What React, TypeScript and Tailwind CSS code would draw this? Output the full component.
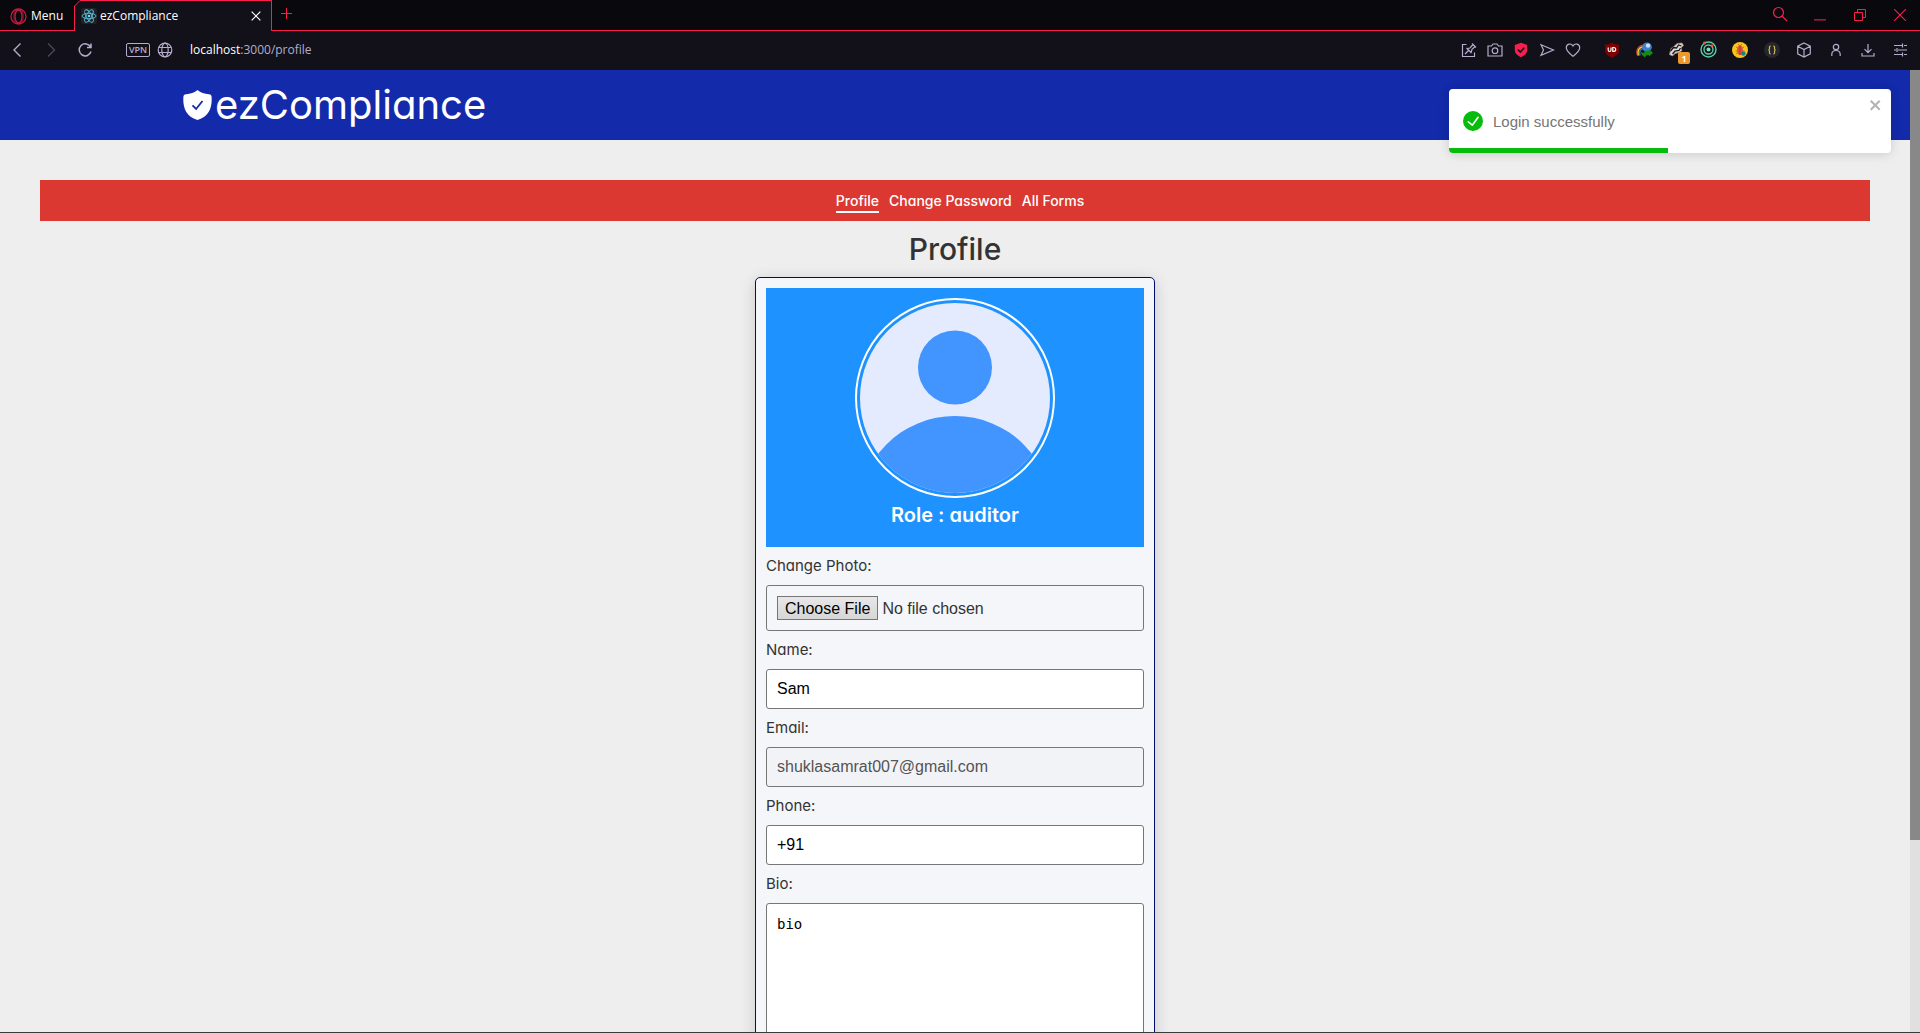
import React, { ReactNode } from "react";

const stroke = {
  fill: "none",
  stroke: "currentColor",
  strokeWidth: 1.2,
} as const;

function Glyph({ size = 16, children }: { size?: number; children: ReactNode }) {
  return (
    <svg width={size} height={size} viewBox="0 0 16 16" aria-hidden="true" {...stroke}>
      {children}
    </svg>
  );
}

function BarButton({ label, wide, children }: { label: string; wide?: boolean; children: ReactNode }) {
  return (
    <button
      type="button"
      aria-label={label}
      className={
        wide
          ? "relative flex h-full w-8 items-center justify-center"
          : "relative flex h-full w-[26px] items-center justify-center"
      }
    >
      {children}
    </button>
  );
}

function TabStrip() {
  return (
    <div className="flex h-[31px] shrink-0 bg-[#08080d] font-['Open_Sans',sans-serif] text-xs text-white">
      <button
        type="button"
        className="flex w-[74px] shrink-0 items-center gap-1 border-b border-[#fa1e4e] pl-2.5 pt-0.5"
      >
        <svg width="17" height="17" viewBox="0 0 17 17" fill="none" stroke="#c41c42" strokeWidth="1.3" aria-hidden="true">
          <circle cx="8.5" cy="8.5" r="7.5" />
          <ellipse cx="8.5" cy="8.5" rx="3.5" ry="6.5" />
          <path d="M11 2.500c3 2 3 10 0 12M6 2.500c-3 2-3 10 0 12" strokeWidth=".7" />
        </svg>
        <span>Menu</span>
      </button>
      <div className="relative flex w-[198px] shrink-0 items-center border-x border-t border-[#fa1e4e] bg-[#121019] pl-1.5 pr-[7px]">
        <svg className="absolute -left-px -top-px" width="7" height="7" viewBox="0 0 7 7" aria-hidden="true">
          <path d="M0 0h7L0 7z" fill="#08080d" />
          <path d="M.5 7V6L6 .5h1" fill="none" stroke="#fa1e4e" />
        </svg>
        <svg width="16" height="16" viewBox="0 0 16 16" aria-hidden="true">
          <rect width="16" height="16" rx="2" fill="#202124" />
          <g fill="none" stroke="#61dafb" strokeWidth=".9" opacity=".85">
            <ellipse cx="8" cy="8" rx="7" ry="2.7" />
            <ellipse cx="8" cy="8" rx="7" ry="2.7" transform="rotate(60 8 8)" />
            <ellipse cx="8" cy="8" rx="7" ry="2.7" transform="rotate(120 8 8)" />
          </g>
          <circle cx="8" cy="8" r="1.3" fill="#61dafb" />
        </svg>
        <span className="ml-[3px] flex-1">ezCompliance</span>
        <button type="button" aria-label="Close tab" className="flex size-4 items-center justify-center">
          <Glyph size={14}>
            <path d="M3 3l10 10M13 3L3 13" strokeWidth="1.4" />
          </Glyph>
        </button>
      </div>
      <div className="flex flex-1 items-center justify-between border-b border-[#fa1e4e] text-[#fa1e4e]">
        <button type="button" aria-label="New tab" className="flex h-full w-[29px] items-center justify-center pb-1">
          <svg width="11" height="11" viewBox="0 0 11 11" fill="none" stroke="currentColor" aria-hidden="true">
            <path d="M5.500 0v11M0 5.500h11" />
          </svg>
        </button>
        <div className="flex h-full">
          <button type="button" aria-label="Search tabs" className="flex w-10 items-center justify-center pb-0.5">
            <Glyph>
              <circle cx="6.5" cy="6.5" r="5" />
              <path d="M10 10l5 5" />
            </Glyph>
          </button>
          <button type="button" aria-label="Minimize" className="flex w-10 items-center justify-center">
            <Glyph size={12}>
              <path d="M0 14.500h16" strokeWidth="1.4" />
            </Glyph>
          </button>
          <button type="button" aria-label="Restore" className="flex w-10 items-center justify-center">
            <svg width="12" height="12" viewBox="0 0 12 12" fill="none" stroke="currentColor" aria-hidden="true">
              <path d="M.5 3.500h8v8h-8zM3.500 3.500v-3h8v8h-3" />
            </svg>
          </button>
          <button type="button" aria-label="Close window" className="flex w-10 items-center justify-center">
            <svg width="12" height="12" viewBox="0 0 12 12" fill="none" stroke="currentColor" strokeWidth="1.1" aria-hidden="true">
              <path d="M0 0l12 12M12 0L0 12" />
            </svg>
          </button>
        </div>
      </div>
    </div>
  );
}

function AddressBar() {
  return (
    <div className="flex h-[39px] shrink-0 items-center bg-[#121019] pb-0.5 font-['Open_Sans',sans-serif] text-[#b5adcb]">
      <button type="button" aria-label="Back" className="flex h-full w-[34px] items-center justify-center">
        <Glyph>
          <path d="M11.500 1.500L5 8l6.500 6.500" strokeWidth="1.4" />
        </Glyph>
      </button>
      <button type="button" aria-label="Forward" className="flex h-full w-[34px] items-center justify-center text-[#4a4657]">
        <Glyph>
          <path d="M5 1.500L11.500 8 5 14.500" strokeWidth="1.4" />
        </Glyph>
      </button>
      <button type="button" aria-label="Reload" className="flex h-full w-[34px] items-center justify-center">
        <Glyph>
          <path d="M13.500 5A6 6 0 1 0 14 9.500M14 1.500V5.500H10" strokeWidth="1.5" />
        </Glyph>
      </button>
      <button
        type="button"
        className="ml-6 flex h-3.5 w-6 items-center justify-center rounded-[2px] border border-[#b5adcb] text-[9px] font-semibold leading-none"
      >
        VPN
      </button>
      <button type="button" aria-label="Site information" className="flex h-full w-[30px] items-center justify-center">
        <Glyph>
          <circle cx="8" cy="8" r="6.8" />
          <ellipse cx="8" cy="8" rx="3.2" ry="6.8" />
          <path d="M1.800 5.500h12.400M1.800 10.500h12.400" />
        </Glyph>
      </button>
      <div className="ml-2.5 flex-1 text-xs">
        <span className="text-white">localhost</span>:3000/profile
      </div>
      <div className="flex h-full">
        <BarButton label="Snap page">
          <Glyph>
            <path d="M5.500 2.500h-4v12h12v-4M4 12l3.500-3.500M5.500 6l5 5M6.500 6.500L9 6l3-3.500M10.300 10l.7-2.700 3.500-3M11 1.500l4 4" />
          </Glyph>
        </BarButton>
        <BarButton label="Snapshot">
          <Glyph>
            <path d="M1 4h3.500L6 2h4l1.500 2H15v10H1z" />
            <circle cx="8" cy="8.7" r="2.8" />
          </Glyph>
        </BarButton>
        <BarButton label="Ad blocker">
          <Glyph>
            <path d="M8 .8L14.200 3v5c0 3.600-3.200 5.800-6.200 7.200C5 13.800 1.800 11.600 1.800 8V3z" fill="#fa1e4e" stroke="none" />
            <path d="M4.800 7.500l2.500 2.500 4-4.200" stroke="#121019" strokeWidth="1.6" />
          </Glyph>
        </BarButton>
        <BarButton label="My Flow">
          <Glyph>
            <path d="M2 2.700L14.500 8 2 13.300 4.500 8z" />
          </Glyph>
        </BarButton>
        <BarButton label="Bookmark">
          <Glyph>
            <path d="M8 14.300C4 11 1.300 9 1.300 5.700 1.300 1.600 6.200.8 8 4c1.800-3.200 6.700-2.400 6.700 1.700C14.700 9 12 11 8 14.300z" />
          </Glyph>
        </BarButton>
      </div>
      <div className="ml-2.5 flex h-full pr-1">
        <BarButton label="uBlock" wide>
          <svg width="16" height="16" viewBox="0 0 16 16" aria-hidden="true">
            <path d="M8 .5c2 1.500 4 2 7 2v5.500c0 4-3 6-7 7.700C4 14 1 12 1 8V2.500c3 0 5-.5 7-2z" fill="#800000" />
            <path d="M4.200 5.500V8q0 1.500 1.400 1.500T7 8V5.500M9.800 5.500a1.900 1.900 0 1 1 0 3.800H8.800V5.500z" fill="none" stroke="#fff" strokeWidth="1.2" />
          </svg>
        </BarButton>
        <BarButton label="Download manager" wide>
          <svg width="17" height="16" viewBox="0 0 17 16" aria-hidden="true">
            <path d="M1.500 13.500C-.5 8 2 4 7.500 3" fill="none" stroke="#d8432f" strokeWidth="1.2" />
            <path d="M2.500 13.500C1 8.500 3 5.500 7.500 4.500" fill="none" stroke="#f2c520" strokeWidth="1.6" />
            <path d="M4 13.500C2.800 9.500 4 7 8 6" fill="none" stroke="#2d6fd8" strokeWidth="1.6" />
            <circle cx="11" cy="5.2" r="4.8" fill="#3f7fd0" />
            <circle cx="12" cy="3.6" r="2.2" fill="#c9e0f8" />
            <path d="M4.500 10l3.500 1 1-2.500h4V7l4 4-4 3.500V13l-3 .5-1 2-2.500-2z" fill="#168a16" />
          </svg>
        </BarButton>
        <BarButton label="Extension, 1 notification" wide>
          <svg width="17" height="16" viewBox="0 0 17 16" aria-hidden="true">
            <path d="M1.500 12.500L3 6.500l3-2 3-3 5-.5 1.500 2.500L13 6l1 2.500-3 2-4 1-2.500 2.500z" fill="#ded8d4" stroke="#a98670" strokeWidth=".8" />
            <path d="M2.500 9l3-3.500 3 .5 2-3 3 1M4.500 12l2.500-3 4-.5L12.500 6" fill="none" stroke="#17151a" strokeWidth="1.3" />
          </svg>
          <span className="absolute bottom-1 left-[18px] flex size-3 items-center justify-center rounded-[2px] bg-[#ed9a2d] text-[9px] font-bold leading-none text-white">
            1
          </span>
        </BarButton>
        <BarButton label="Orbit" wide>
          <svg width="17" height="17" viewBox="0 0 17 17" fill="none" stroke="#55cfa4" strokeWidth="1.4" aria-hidden="true">
            <circle cx="8.5" cy="8.5" r="7.5" />
            <circle cx="8.5" cy="8.5" r="4.5" />
            <circle cx="8.5" cy="8.5" r="2" fill="#6ee7b7" stroke="none" />
            <circle cx="4.5" cy="2" r="1.6" fill="#f0563a" stroke="none" />
            <circle cx="12" cy="5" r="1.4" fill="#f0563a" stroke="none" />
          </svg>
        </BarButton>
        <BarButton label="Bug finder" wide>
          <svg width="16" height="16" viewBox="0 0 16 16" aria-hidden="true">
            <circle cx="8" cy="8" r="8" fill="#f9c41b" />
            <path d="M4 5l8 6M4 12l8-7M3.500 9h9M6 2l2 2 2-2" stroke="#a8552c" strokeWidth=".7" fill="none" />
            <ellipse cx="8" cy="8.3" rx="3" ry="4.8" fill="#e0563f" />
            <path d="M8 4v9" stroke="#8b2a24" strokeWidth=".7" />
            <circle cx="11.3" cy="11.5" r="2.3" fill="#168578" />
          </svg>
        </BarButton>
        <BarButton label="JSON viewer" wide>
          <svg width="16" height="16" viewBox="0 0 16 16" aria-hidden="true">
            <circle cx="8" cy="8" r="8" fill="#27262a" />
            <path d="M6.800 4C5 4 5.500 5.500 5.500 6.500S5 8 4.300 8c.7 0 1.200.5 1.200 1.500S5 12 6.800 12M9.200 4c1.800 0 1.300 1.500 1.300 2.500S11 8 11.700 8c-.7 0-1.200.5-1.200 1.500s.5 2.500-1.300 2.500" fill="none" stroke="#c9b860" strokeWidth="1.2" />
          </svg>
        </BarButton>
        <BarButton label="Extensions" wide>
          <Glyph>
            <path d="M8 1l6.300 3.200v7.600L8 15l-6.300-3.200V4.200zM1.700 4.200L8 7.500l6.300-3.300M8 7.500V15" />
          </Glyph>
        </BarButton>
        <BarButton label="Account" wide>
          <Glyph>
            <circle cx="8" cy="5" r="2.7" />
            <path d="M3.800 14v-1.500C3.800 10 5 8.500 8 8.500s4.200 1.500 4.200 4V14" />
          </Glyph>
        </BarButton>
        <BarButton label="Downloads" wide>
          <Glyph>
            <path d="M8 2v8.500M4.500 7.200L8 10.700l3.500-3.500M2 11v3h12v-3" />
          </Glyph>
        </BarButton>
        <BarButton label="Easy setup" wide>
          <Glyph>
            <path d="M2 3.500h8M12 3.500h3M10.500 1.500v4M2 8h2M6 8h9M5 6v4M2 12.500h8M12 12.500h3M10.500 10.500v4" />
          </Glyph>
        </BarButton>
      </div>
    </div>
  );
}

function Toast() {
  return (
    <div
      role="status"
      className="absolute right-[19px] top-[19px] z-10 flex h-16 w-[442px] items-center overflow-hidden rounded bg-white pl-3.5 font-['Liberation_Sans',sans-serif] text-[#757575] shadow-[0_1px_10px_0_rgba(0,0,0,0.1),0_2px_15px_0_rgba(0,0,0,0.05)]"
    >
      <svg width="20" height="20" viewBox="0 0 24 24" fill="#07bc0c" aria-hidden="true">
        <path d="M12 0a12 12 0 1012 12A12.014 12.014 0 0012 0zm6.927 8.200l-6.845 9.289a1.011 1.011 0 01-1.430.188l-4.888-3.908a1 1 0 111.250-1.562l4.076 3.261 6.227-8.451a1 1 0 111.610 1.183z" />
      </svg>
      <span className="ml-2.5 pt-0.5 text-[15px] leading-5">Login successfully</span>
      <button type="button" aria-label="close" className="absolute right-2 top-2 text-[#b3b3b3]">
        <svg width="14" height="16" viewBox="0 0 14 16" fill="currentColor" aria-hidden="true">
          <path fillRule="evenodd" d="M7.710 8.230l3.750 3.750-1.480 1.480-3.750-3.750-3.750 3.750L1 11.980l3.750-3.750L1 4.480 2.480 3l3.750 3.750L9.980 3l1.480 1.480-3.750 3.750z" />
        </svg>
      </button>
      <div className="absolute bottom-0 left-0 h-[5px] w-[219px] bg-[#07bc0c]" />
    </div>
  );
}

const links = ["Profile", "Change Password", "All Forms"];

function Avatar() {
  return (
    <svg width="200" height="200" viewBox="0 0 200 200" role="img" aria-label="Profile photo">
      <defs>
        <clipPath id="face">
          <circle cx="100" cy="100" r="95" />
        </clipPath>
      </defs>
      <circle cx="100" cy="100" r="99" fill="none" stroke="#fff" strokeWidth="2" />
      <g clipPath="url(#face)">
        <rect width="200" height="200" fill="#e4ebff" />
        <circle cx="100" cy="69.500" r="37" fill="#4294ff" />
        <circle cx="100" cy="215" r="97" fill="#4294ff" />
      </g>
    </svg>
  );
}

const field =
  "block w-full rounded-[3px] border border-[#767676] px-2.5 font-['Liberation_Sans',sans-serif] text-base";

function Field({ id, label, children }: { id: string; label: string; children: ReactNode }) {
  return (
    <div>
      <label htmlFor={id} className="block py-2 text-[15px] leading-[22px]">
        {label}
      </label>
      {children}
    </div>
  );
}

export default function App() {
  return (
    <div className="flex h-screen flex-col overflow-hidden border-b border-[#3a3a3a] bg-[#eee]">
      <TabStrip />
      <AddressBar />
      <div className="flex min-h-0 flex-1">
        <div className="relative min-w-0 flex-1 overflow-hidden font-['Inter',sans-serif] text-[#333] [font-feature-settings:'cv11']">
          <header className="flex h-[70px] items-center bg-[#132aab] pl-[183px] text-white">
            <svg width="29" height="30" viewBox="0 0 29 30" aria-hidden="true">
              <path d="M14.500 0C17.500 2.800 21.500 4 26 4.200c1.600.1 2.500 1 2.600 2.500C29.300 17 26.500 26.500 14.500 30 2.500 26.500-.3 17 .4 6.700.5 5.200 1.400 4.300 3 4.200 7.500 4 11.500 2.800 14.500 0z" fill="#fff" />
              <path d="M9.500 15.300l3.600 3.700 6.400-8" fill="none" stroke="#132aab" strokeWidth="1.8" />
            </svg>
            <span className="ml-[3px] text-[40px] leading-[60px]">ezCompliance</span>
          </header>
          <Toast />
          <main className="px-10 pt-10">
            <nav className="flex justify-center gap-2.5 bg-[#da3831] pb-2 pl-2.5 pt-2.5 text-[14px] font-medium leading-[21px] text-white">
              {links.map((text, i) => (
                <a
                  key={text}
                  href="#"
                  className={i === 0 ? "border-b-2 border-white" : "border-b-2 border-transparent"}
                >
                  {text}
                </a>
              ))}
            </nav>
            <h1 className="py-1.5 text-center text-[30px] font-medium leading-[44px]">Profile</h1>
            <form className="mx-auto w-[400px] rounded-[5px] border border-[#000d6b] bg-[#f4f6fa] p-2.5 shadow-[0_3px_15px_rgba(0,0,0,0.16)]">
              <div className="flex h-[259px] flex-col items-center bg-[#1e92ff] pt-2.5 text-white">
                <Avatar />
                <h2 className="text-xl font-semibold leading-[34px]">Role : auditor</h2>
              </div>
              <Field id="photo" label="Change Photo:">
                <input
                  id="photo"
                  type="file"
                  className={`${field} h-[46px] py-2.5 leading-6 file:h-6 file:border file:border-solid file:border-[#767676] file:bg-linear-to-b file:from-[#e9e7e7] file:to-[#d6d6d6] file:px-[7px] file:text-black`}
                />
              </Field>
              <Field id="name" label="Name:">
                <input id="name" type="text" defaultValue="Sam" className={`${field} h-10 bg-white text-black`} />
              </Field>
              <Field id="email" label="Email:">
                <input
                  id="email"
                  type="email"
                  disabled
                  defaultValue="shuklasamrat007@gmail.com"
                  className={`${field} h-10 bg-[#f2f3f7] text-[#545454]`}
                />
              </Field>
              <Field id="phone" label="Phone:">
                <input id="phone" type="tel" defaultValue="+91" className={`${field} h-10 bg-white text-black`} />
              </Field>
              <Field id="bio" label="Bio:">
                <textarea
                  id="bio"
                  rows={10}
                  defaultValue="bio"
                  className="block w-full rounded-[3px] border border-[#767676] bg-white px-2.5 py-2.5 font-['DejaVu_Sans_Mono',monospace] text-[14px] leading-5 text-black"
                />
              </Field>
            </form>
          </main>
        </div>
        <div className="w-2.5 shrink-0 bg-[#e0e0e0]">
          <div className="h-4/5 bg-[#888]" />
        </div>
      </div>
    </div>
  );
}
